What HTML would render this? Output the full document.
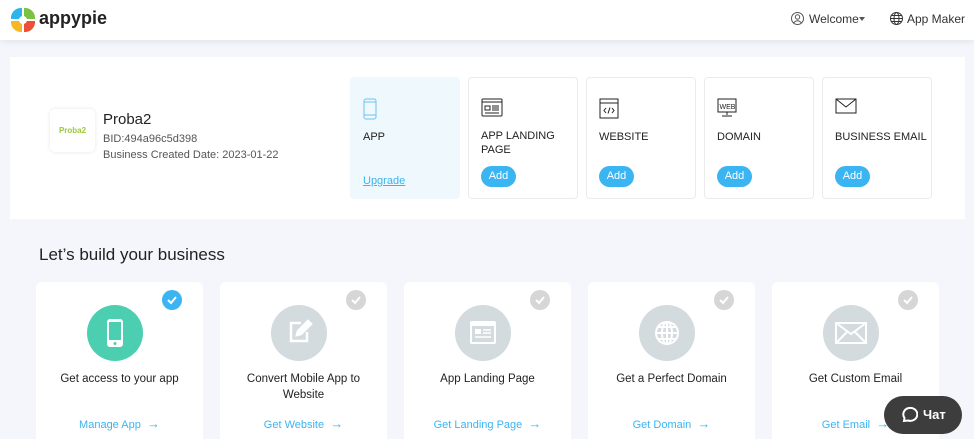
<!DOCTYPE html>
<html><head><meta charset="utf-8"><style>
*{margin:0;padding:0;box-sizing:border-box}
html,body{width:974px;height:439px;overflow:hidden}
body{background:#f4f6fb;font-family:"Liberation Sans",sans-serif;position:relative;color:#222}
.hdr{position:absolute;left:0;top:0;width:974px;height:40px;background:#fff;box-shadow:0 2px 6px rgba(0,0,0,.07)}
.abs{position:absolute}
.panel{position:absolute;left:10px;top:57px;width:955px;height:162px;background:#fff}
.card{position:absolute;top:77px;width:110px;height:122px;border:1px solid #ebebeb;border-radius:4px;background:#fff}
.card .t{position:absolute;left:12px;top:51px;font-size:11px;line-height:14px;color:#222}
.card .ic{position:absolute;left:12px;top:20px}
.add{position:absolute;left:12px;top:88px;width:35px;height:21px;border-radius:11px;background:#3bb4f2;color:#fff;font-size:11px;text-align:center;line-height:21px}
.bc{position:absolute;top:282px;width:167px;height:170px;background:#fff;border-radius:6px}
.bc .c{position:absolute;left:51px;top:23px;width:56px;height:56px;border-radius:50%;background:#d3dbde}
.bc .k{position:absolute;left:126px;top:8px;width:20px;height:20px;border-radius:50%;background:#d6d6d6}
.bc .tt{position:absolute;left:0;width:167px;top:89px;text-align:center;font-size:11.5px;line-height:16px;color:#222}
.bc .l{position:absolute;left:0;width:167px;top:137px;text-align:center;font-size:11px;color:#3bb4f2}
.bc .l b{font-size:13px;line-height:10px}
</style></head><body>
<div class="hdr">
<svg class="abs" style="left:9px;top:6px" width="28" height="28" viewBox="0 0 28 28">
<path d="M2 13 A10 10 0 0 1 13 2 L13 13Z" fill="#2bb5ea"/><path d="M15 2 A10 10 0 0 1 26 13 L15 13Z" fill="#7cc242"/>
<path d="M2 15 L13 15 L13 26 A10 10 0 0 1 2 15Z" fill="#f6b827"/><path d="M15 15 L26 15 A10 10 0 0 1 15 26Z" fill="#ef4f36"/>
<circle cx="14" cy="14" r="4" fill="#fff"/></svg>
<div class="abs" style="left:39px;top:8px;font-size:18px;font-weight:bold;color:#222">appypie</div>
<svg class="abs" style="left:791px;top:12px" width="13" height="13" viewBox="0 0 13 13" fill="none" stroke="#555"><circle cx="6.5" cy="6.5" r="6"/><circle cx="6.5" cy="5" r="2.2"/><path d="M2.5 11 Q6.5 6.5 10.5 11"/></svg>
<div class="abs" style="left:809px;top:12px;font-size:12px;color:#333">Welcome</div>
<div class="abs" style="left:859px;top:17px;border:3.5px solid transparent;border-top:4px solid #555"></div>
<svg class="abs" style="left:890px;top:12px" width="13" height="13" viewBox="0 0 13 13" fill="none" stroke="#333"><circle cx="6.5" cy="6.5" r="6"/><ellipse cx="6.5" cy="6.5" rx="2.5" ry="6"/><path d="M.5 6.5H12.5M1.5 3.5H11.5M1.5 9.5H11.5"/></svg>
<div class="abs" style="left:907px;top:12px;font-size:12px;color:#333">App Maker</div>
</div>
<div class="panel"></div>
<div class="abs" style="left:50px;top:109px;width:45px;height:43px;border-radius:5px;background:#fff;box-shadow:0 0 4px rgba(0,0,0,.1);font-size:8px;font-weight:bold;color:#9cc83a;text-align:center;line-height:43px">Proba2</div>
<div class="abs" style="left:103px;top:111px;font-size:15px;color:#222">Proba2</div>
<div class="abs" style="left:103px;top:133px;font-size:11px;color:#555">BID:494a96c5d398</div>
<div class="abs" style="left:103px;top:149px;font-size:11px;color:#555">Business Created Date: 2023-01-22</div>
<div class="card" style="left:350px;width:110px;background:#eef8fd;border-color:#eef8fd">
<svg class="ic" width="14" height="22" viewBox="0 0 14 22" fill="none" stroke="#6ec3f0"><rect x="1" y="1" width="12" height="20" rx="2"/><path d="M1 4H13M1 17H13"/></svg>
<div class="t" style="top:52px">APP</div>
<div class="abs" style="left:12px;top:97px;font-size:11px;color:#3bb4f2;text-decoration:underline">Upgrade</div></div>
<div class="card" style="left:468px"><svg class="ic" width="22" height="19" viewBox="0 0 22 19" fill="none" stroke="#222"><rect x="1" y="1" width="20" height="17" rx="1"/><path d="M1 4H21"/><rect x="4" y="8" width="5" height="4"/><path d="M11 8H18M11 10H18M11 12H18M4 15H18"/></svg><div class="t" style="top:51px">APP LANDING<br>PAGE</div><div class="add">Add</div></div>
<div class="card" style="left:586px"><svg class="ic" width="20" height="21" viewBox="0 0 20 21" fill="none" stroke="#222"><rect x="1" y="1" width="18" height="19"/><path d="M1 5H19M7 10L5 12.5L7 15M13 10L15 12.5L13 15M11 9.5L9 15.5"/></svg><div class="t" style="top:52px">WEBSITE</div><div class="add">Add</div></div>
<div class="card" style="left:704px"><svg class="ic" width="20" height="20" viewBox="0 0 20 20" fill="none" stroke="#222"><rect x="1" y="1" width="18" height="13"/><text x="2.5" y="11" font-size="7" font-family="Liberation Sans" fill="#222" stroke="none">WEB</text><path d="M10 14V17M5 18H15"/></svg><div class="t" style="top:52px">DOMAIN</div><div class="add">Add</div></div>
<div class="card" style="left:822px"><svg class="ic" width="22" height="16" viewBox="0 0 22 16" fill="none" stroke="#222"><rect x="1" y="1" width="20" height="14"/><path d="M1 1L11 9L21 1"/></svg><div class="t" style="top:52px">BUSINESS EMAIL</div><div class="add">Add</div></div>
<div class="abs" style="left:39px;top:245px;font-size:17px;color:#222">Let’s build your business</div>
<div class="bc" style="left:36px"><div class="c" style="background:#4ccfb0"><svg class="abs" style="left:19px;top:13px" width="18" height="30" viewBox="0 0 18 30"><rect x="1" y="1" width="16" height="28" rx="3" fill="#fff"/><rect x="3" y="4" width="12" height="18" fill="#4ccfb0"/><circle cx="9" cy="25.5" r="1.5" fill="#4ccfb0"/></svg></div><div class="k" style="background:#3bb4f2"><svg class="abs" style="left:5px;top:5px" width="10" height="10"><path d="M1 5L4 8L9 2" stroke="#fff" stroke-width="2" fill="none"/></svg></div><div class="tt">Get access to your app</div><div class="l">Manage App &nbsp;<b>→</b></div></div>
<div class="bc" style="left:220px"><div class="c"><svg class="abs" style="left:16px;top:14px" width="26" height="26" viewBox="0 0 26 26" fill="none" stroke="#fff" stroke-width="2.5"><path d="M14 4H4V22H20V13"/><path d="M10 16L11 12L21 2L24 5L14 15Z" fill="#fff"/></svg></div><div class="k"><svg class="abs" style="left:5px;top:5px" width="10" height="10"><path d="M1 5L4 8L9 2" stroke="#fff" stroke-width="2" fill="none"/></svg></div><div class="tt">Convert Mobile App to<br>Website</div><div class="l">Get Website &nbsp;<b>→</b></div></div>
<div class="bc" style="left:404px"><div class="c"><svg class="abs" style="left:15px;top:16px" width="26" height="23" viewBox="0 0 26 23"><rect x="0" y="0" width="26" height="23" rx="2" fill="#fff"/><rect x="2" y="5" width="22" height="16" fill="#d3dbde"/><rect x="5" y="8" width="6" height="5" fill="#fff"/><path d="M13 9H21M13 12H21M5 16H21" stroke="#fff" stroke-width="1.5"/></svg></div><div class="k"><svg class="abs" style="left:5px;top:5px" width="10" height="10"><path d="M1 5L4 8L9 2" stroke="#fff" stroke-width="2" fill="none"/></svg></div><div class="tt">App Landing Page</div><div class="l">Get Landing Page &nbsp;<b>→</b></div></div>
<div class="bc" style="left:588px"><div class="c"><svg class="abs" style="left:15px;top:15px" width="26" height="26" viewBox="0 0 26 26" fill="none" stroke="#fff" stroke-width="2"><circle cx="13" cy="13" r="11"/><ellipse cx="13" cy="13" rx="5" ry="11"/><path d="M2 13H24M4 7H22M4 19H22M13 2V24"/></svg></div><div class="k"><svg class="abs" style="left:5px;top:5px" width="10" height="10"><path d="M1 5L4 8L9 2" stroke="#fff" stroke-width="2" fill="none"/></svg></div><div class="tt">Get a Perfect Domain</div><div class="l">Get Domain &nbsp;<b>→</b></div></div>
<div class="bc" style="left:772px"><div class="c"><svg class="abs" style="left:12px;top:17px" width="32" height="22" viewBox="0 0 32 22" fill="none" stroke="#fff" stroke-width="2"><rect x="1" y="1" width="30" height="20"/><path d="M1 1L16 12L31 1M1 21L12 10M31 21L20 10"/></svg></div><div class="k"><svg class="abs" style="left:5px;top:5px" width="10" height="10"><path d="M1 5L4 8L9 2" stroke="#fff" stroke-width="2" fill="none"/></svg></div><div class="tt">Get Custom Email</div><div class="l">Get Email &nbsp;<b>→</b></div></div>
<div class="abs" style="left:884px;top:396px;width:78px;height:38px;border-radius:19px;background:#3d3d3d;color:#fff;font-weight:bold;font-size:13px">
<svg class="abs" style="left:16px;top:10px" width="18" height="18" viewBox="0 0 18 18" fill="none" stroke="#fff" stroke-width="2"><path d="M4 15L4.5 12A7 6.5 0 1 1 8 14.5Z"/></svg>
<span class="abs" style="left:39px;top:11px">Чат</span></div>
</body></html>
